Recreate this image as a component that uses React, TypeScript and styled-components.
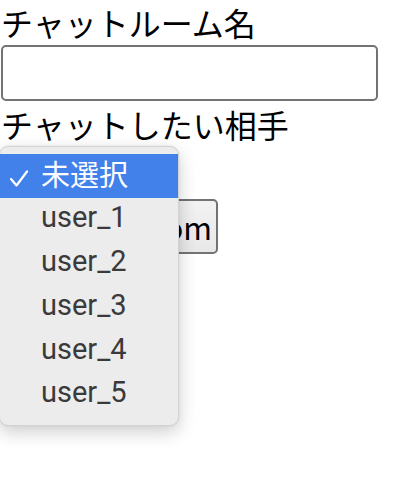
import React from "react";
import styled, { createGlobalStyle } from "styled-components";

const Global = createGlobalStyle`
  html, body { margin: 0; padding: 0; background: #ffffff; }
  body { font-family: "Noto Sans CJK JP", "Noto Sans", sans-serif; color: #000; }
`;

const Page = styled.div`
  display: flex;
  flex-direction: column;
  align-items: flex-start;
  width: 404px;
  height: 481px;
  overflow: hidden;
`;

const Label = styled.label<{ $h: number }>`
  display: block;
  font-size: 32px;
  line-height: ${(p) => p.$h}px;
  height: ${(p) => p.$h}px;
  padding-left: 1px;
  white-space: nowrap;
`;

const TextInput = styled.input`
  box-sizing: border-box;
  width: 377px;
  height: 56px;
  margin: 0 0 0 1px;
  border: 2px solid #737373;
  border-radius: 5px;
  background: #fff;
  font-size: 31px;
`;

const SelectRow = styled.div`
  position: relative;
  height: 52px;
  width: 180px;
`;

const NativeSelect = styled.select`
  box-sizing: border-box;
  width: 178px;
  height: 44px;
  margin-top: 7px;
  font-size: 28px;
`;

const Popup = styled.ul`
  position: absolute;
  left: -1px;
  top: -1px;
  box-sizing: border-box;
  width: 180px;
  height: 280px;
  margin: 0;
  padding: 7px 0 0;
  list-style: none;
  background: #ececec;
  border: 1px solid #d3d3d3;
  border-radius: 9px;
  box-shadow: 0 6px 18px rgba(0, 0, 0, 0.2), 0 0 2px rgba(0, 0, 0, 0.1);
`;

const Item = styled.li<{ $selected?: boolean }>`
  box-sizing: border-box;
  display: flex;
  align-items: center;
  height: 43.8px;
  padding: 0 0 5px 41px;
  position: relative;
  font-family: Roboto, "Noto Sans CJK JP", sans-serif;
  font-size: 29px;
  color: ${(p) => (p.$selected ? "#ffffff" : "#3a3a3a")};
  background: ${(p) => (p.$selected ? "#4281ea" : "transparent")};
`;

const CheckIcon = styled.svg`
  position: absolute;
  left: 9px;
  top: 16px;
  width: 20px;
  height: 18px;
`;

const Button = styled.button`
  box-sizing: border-box;
  width: 218px;
  height: 55px;
  margin-left: 0;
  padding: 0 4px 0 0;
  text-align: right;
  font-family: "Noto Sans CJK JP", "Noto Sans", sans-serif;
  font-size: 31px;
  color: #000;
  border: 2px solid #737373;
  border-radius: 5px;
  background: linear-gradient(#f2f2f2, #e8e8e8);
  white-space: nowrap;
`;

const options = ["未選択", "user_1", "user_2", "user_3", "user_4", "user_5"];

export default function App() {
  return (
    <Page>
      <Global />
      <Label $h={45}>チャットルーム名</Label>
      <TextInput type="text" />
      <Label $h={46}>チャットしたい相手</Label>
      <SelectRow>
        <NativeSelect defaultValue="未選択">
          {options.map((o) => (
            <option key={o}>{o}</option>
          ))}
        </NativeSelect>
        <Popup>
          {options.map((o, i) => (
            <Item key={o} $selected={i === 0}>
              {i === 0 && (
                <CheckIcon viewBox="0 0 20 18" fill="none">
                  <polyline
                    points="2,9 7.5,15.5 18,1.5"
                    stroke="#ffffff"
                    strokeWidth="2.2"
                    strokeLinecap="round"
                    strokeLinejoin="round"
                  />
                </CheckIcon>
              )}
              {o}
            </Item>
          ))}
        </Popup>
      </SelectRow>
      <Button>Create Room</Button>
    </Page>
  );
}
